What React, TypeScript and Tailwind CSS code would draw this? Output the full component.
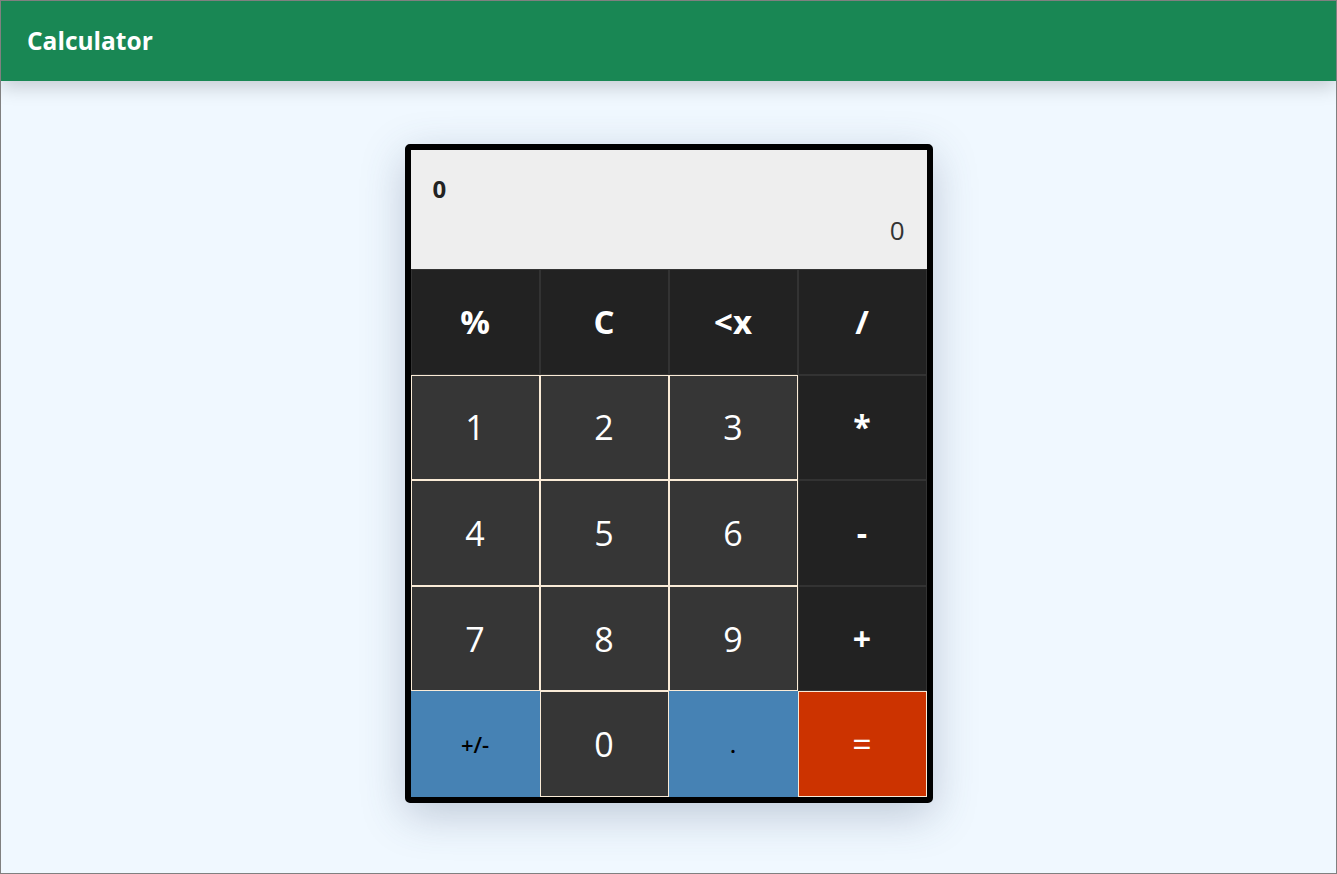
import React from "react";

type Key = { label: string; cls: string };

const top = "bg-[#222222] border border-[#333333] text-white font-bold text-[33px]";
const num = "bg-[#363636] border border-[#faebd7] text-white font-normal text-[34px]";
const op = "bg-[#222222] border border-[#333333] text-white font-bold text-[32px]";
const blue = "bg-[#4682b4] border border-[#4682b4] text-black font-semibold text-[22px]";
const eq = "bg-[#cc3300] border border-[#faebd7] text-white font-normal text-[34px]";

const keys: Key[] = [
  { label: "%", cls: top },
  { label: "C", cls: top },
  { label: "<x", cls: top },
  { label: "/", cls: top },
  { label: "1", cls: num },
  { label: "2", cls: num },
  { label: "3", cls: num },
  { label: "*", cls: op },
  { label: "4", cls: num },
  { label: "5", cls: num },
  { label: "6", cls: num },
  { label: "-", cls: op },
  { label: "7", cls: num },
  { label: "8", cls: num },
  { label: "9", cls: num },
  { label: "+", cls: op },
  { label: "+/-", cls: blue },
  { label: "0", cls: num },
  { label: ".", cls: blue },
  { label: "=", cls: eq },
];

export default function App() {
  return (
    <div
      className="w-[1337px] h-[874px] border border-[#808080] bg-[#f0f8ff] flex flex-col overflow-hidden"
      style={{ fontFamily: '"Open Sans", "Noto Sans", sans-serif' }}
    >
      <header className="h-[80px] shrink-0 bg-[#198754] flex items-center px-[26px] shadow-[0_6px_18px_rgba(0,0,0,0.18)] relative z-10">
        <h1 className="text-white font-bold text-[24.5px] leading-none">Calculator</h1>
      </header>
      <main className="flex-1 flex justify-center pt-[63px]">
        <div className="w-[528px] h-[659px] border-[6px] border-black rounded-[5px] bg-black shadow-[0_12px_44px_rgba(60,80,110,0.28)] flex flex-col">
          <div className="h-[119px] bg-[#eeeeee] flex flex-col pl-[22px] pr-[22px] pt-[23px]">
            <div className="text-[24px] font-bold text-[#222222] leading-[32px]">0</div>
            <div className="text-right text-[26px] text-[#333333] leading-[32px] mt-[9px]">0</div>
          </div>
          <div className="grid grid-cols-4 grid-rows-5 flex-1">
            {keys.map((k, i) => (
              <button
                key={i}
                className={`${k.cls} flex items-center justify-center leading-none`}
              >
                {k.label}
              </button>
            ))}
          </div>
        </div>
      </main>
    </div>
  );
}
